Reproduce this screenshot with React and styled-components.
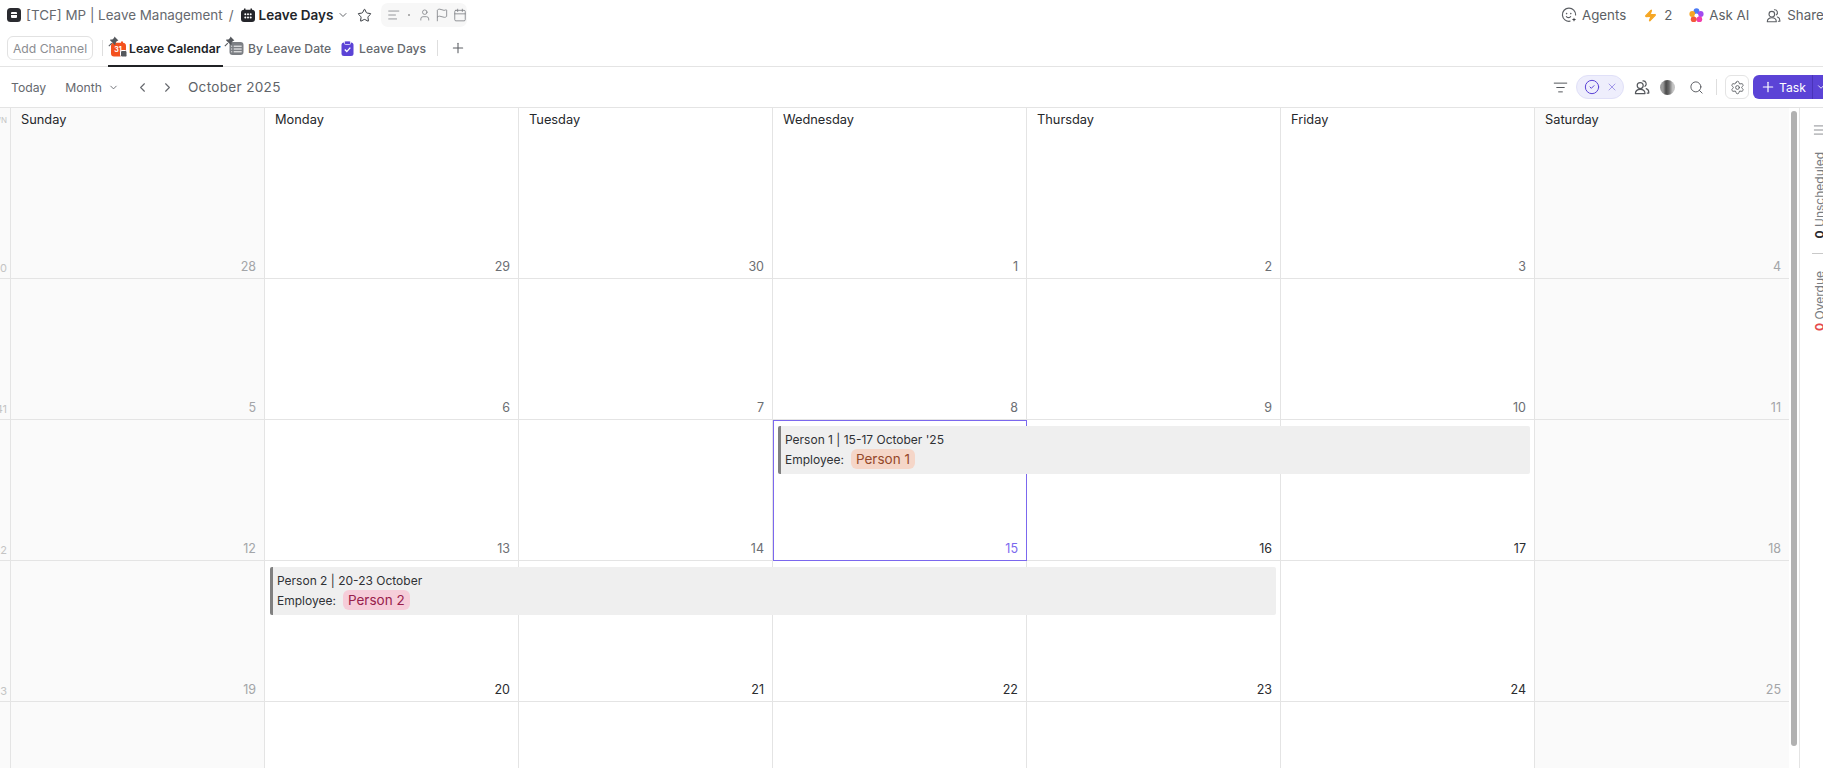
import React from 'react';
import styled, { createGlobalStyle } from 'styled-components';
import {
    AlignLeft, Calendar, ChevronDown, ChevronLeft, ChevronRight, CircleCheck, Flag,
    ListFilter, Menu, Plus, Search, Settings, Star, User, X, Zap,
} from 'lucide-react';

const GlobalStyle = createGlobalStyle`
    html, body {
        margin: 0;
        padding: 0;
        background: #fff;
        font-family: Inter, "Liberation Sans", sans-serif;
        overflow: hidden;
    }
    * { box-sizing: border-box; }
`;

const Page = styled.div`
    width: 1823px;
    height: 768px;
    overflow: hidden;
    display: flex;
    flex-direction: column;
    color: #2a2e34;
`;

const TopBar = styled.header`
    height: 30px;
    flex: none;
    display: flex;
    align-items: center;
    justify-content: space-between;
    padding-left: 7px;
`;

const Row = styled.div`
    display: flex;
    align-items: center;
    gap: ${(p) => p.$gap || 0}px;
`;

const Crumb = styled.span`
    font-size: ${(p) => (p.$strong ? 13.5 : 13.4)}px;
    color: ${(p) => (p.$strong ? '#22252a' : '#66696e')};
    font-weight: ${(p) => (p.$strong ? 600 : 400)};
    margin-left: ${(p) => p.$left || 0}px;
    white-space: nowrap;
`;

const MetaPill = styled.div`
    width: 86px;
    height: 24px;
    margin-left: 9px;
    background: #f7f7f7;
    border-radius: 7px;
    display: flex;
    align-items: center;
    padding-left: 6px;
    color: #7d8085;
`;

const Dot = styled.span`
    width: 2px;
    height: 2px;
    border-radius: 50%;
    background: #999;
    margin: 0 8px 0 7px;
`;

const TopActions = styled.div`
    display: flex;
    align-items: center;
    width: 262px;
    flex: none;
    color: #5c5f64;
    font-size: 13.3px;
    white-space: nowrap;
`;

const TopAction = styled.span`
    display: flex;
    align-items: center;
    gap: ${(p) => p.$gap || 5}px;
    margin-right: ${(p) => p.$right || 0}px;
`;

const TabBar = styled.nav`
    height: 37px;
    flex: none;
    display: flex;
    align-items: center;
    padding-left: 7px;
    border-bottom: 1px solid #e4e4e4;
`;

const ChannelButton = styled.button`
    width: 86px;
    height: 24px;
    padding: 0;
    font: 400 12.2px Inter, "Liberation Sans", sans-serif;
    color: #8b8d91;
    background: #fff;
    border: 1px solid #e2e2e2;
    border-radius: 6px;
`;

const VSep = styled.span`
    width: 1px;
    height: ${(p) => p.$h || 16}px;
    background: #dedede;
    margin: 0 ${(p) => p.$right || 0}px 0 ${(p) => p.$left || 0}px;
`;

const Tab = styled.div`
    position: relative;
    height: 37px;
    display: flex;
    align-items: center;
    gap: ${(p) => p.$gap || 4}px;
    width: ${(p) => p.$width}px;
    padding-left: ${(p) => p.$pad || 0}px;
    padding-top: 2px;
    font-size: 12.2px;
    font-weight: ${(p) => (p.$active ? 600 : 500)};
    color: ${(p) => (p.$active ? '#202225' : '#66696e')};
    white-space: nowrap;
    border-bottom: 2px solid ${(p) => (p.$active ? '#202225' : 'transparent')};
`;

const PinBadge = styled.svg`
    position: absolute;
    left: ${(p) => p.$left}px;
    top: 6px;
`;

const AddTab = styled.span`
    display: flex;
    margin-left: 12px;
    color: #5c5f64;
`;

const Toolbar = styled.div`
    height: 40px;
    flex: none;
    display: flex;
    align-items: center;
    justify-content: space-between;
    padding-left: 11px;
    font-size: 12.2px;
    color: #66696e;
`;

const ToolText = styled.span`
    margin-left: ${(p) => p.$left || 0}px;
    margin-right: ${(p) => p.$right || 0}px;
    white-space: nowrap;
`;

const Title = styled.span`
    font-size: 13.6px;
    letter-spacing: 0.3px;
    margin-left: 13px;
    color: #606368;
`;

const IconSlot = styled.span`
    display: flex;
    margin-left: ${(p) => p.$left || 0}px;
    margin-right: ${(p) => p.$right || 0}px;
    color: ${(p) => p.$color || 'inherit'};
`;

const Tools = styled.div`
    display: flex;
    align-items: center;
    width: 270px;
    flex: none;
    color: #55585d;
    & > * { flex: none; }
`;

const FilterPill = styled.div`
    width: 48px;
    height: 24px;
    margin-left: 8px;
    border-radius: 12px;
    background: #eeeefc;
    border: 1px solid #e0e0f8;
    display: flex;
    align-items: center;
    padding-left: 7px;
    gap: 6px;
    color: #5b43d6;
`;

const Avatar = styled.span`
    width: 15px;
    height: 15px;
    margin-left: 10px;
    border-radius: 50%;
    background: linear-gradient(90deg, #9c9c9c 0 20%, #4a4a4a 40%, #6a6a6a 60%, #c4c4c4 85%);
`;

const SettingsButton = styled.span`
    width: 24px;
    height: 24px;
    margin: 0 4px 0 8px;
    display: flex;
    align-items: center;
    justify-content: center;
    border: 1px solid #e4e4e4;
    border-radius: 6px;
`;

const TaskButton = styled.div`
    width: 80px;
    height: 24px;
    display: flex;
    align-items: center;
    background: #5b43d6;
    color: #fff;
    font-size: 12.2px;
    font-weight: 400;
    border-radius: 6px 0 0 6px;
    padding-left: 7px;
    gap: 3px;
    & > svg { flex: none; }
`;

const TaskSplit = styled.span`
    display: flex;
    flex: none;
    align-items: center;
    height: 24px;
    margin-left: 3px;
    padding-left: 3px;
    border-left: 1px solid #4a34b8;
`;

const Body = styled.div`
    flex: 1;
    min-height: 0;
    display: flex;
    border-top: 1px solid #e4e4e4;
`;

const CalendarArea = styled.main`
    position: relative;
    width: 1800px;
    flex: none;
    border-right: 1px solid #e4e4e4;
`;

const Scrollbar = styled.div`
    position: absolute;
    left: 1791px;
    top: 3px;
    width: 6px;
    height: 635px;
    border-radius: 3px;
    background: #b1b1b1;
`;

const Week = styled.section`
    display: grid;
    width: 1789px;
    height: ${(p) => p.$height}px;
    grid-template-columns: 11px repeat(7, 254px);
    grid-template-rows: 1fr;
`;

const WeekNo = styled.div`
    grid-row: 1;
    grid-column: 1;
    display: flex;
    flex-direction: column;
    justify-content: space-between;
    align-items: flex-end;
    overflow: hidden;
    background: #fafafa;
    border-right: 1px solid #e4e4e4;
    border-bottom: 1px solid #e4e4e4;
    padding: 7px 3px 3px 0;
    font-size: 11px;
    color: #c4c4c4;
    white-space: nowrap;
`;

const HeadMark = styled.span`
    font-size: 8px;
    line-height: 10px;
`;

const Cell = styled.div`
    grid-row: 1;
    grid-column: ${(p) => p.$col};
    display: flex;
    flex-direction: column;
    justify-content: space-between;
    background: ${(p) => (p.$weekend ? '#fafafa' : '#fff')};
    border-right: 1px solid #e4e4e4;
    border-bottom: 1px solid #e4e4e4;
    ${(p) => p.$selected && `
        border: 1px solid #7b68ee;
    `}
    ${(p) => p.$last && 'border-right: none;'}
`;

const DayName = styled.div`
    padding: 4px 0 0 10px;
    font-size: 12.8px;
    line-height: 15px;
    color: #25272b;
`;

const DateNo = styled.div`
    margin-top: auto;
    padding: 0 8px 3px 0;
    text-align: right;
    font-size: 12.5px;
    line-height: 16px;
    color: ${(p) => p.$color};
`;

const EventBar = styled.article`
    grid-row: 1;
    grid-column: ${(p) => p.$start} / span ${(p) => p.$span};
    z-index: 1;
    align-self: start;
    height: 48px;
    margin: 6px 5px 0;
    padding: 5px 0 0 4px;
    background: #efefef;
    border-left: 3px solid #808080;
    border-radius: 2px;
    font-size: 12px;
    color: #303236;
`;

const EventTitle = styled.div`
    line-height: 18px;
    white-space: nowrap;
`;

const EventMeta = styled.div`
    display: flex;
    align-items: center;
    height: 20px;
    gap: 7px;
`;

const Tag = styled.span`
    height: 20px;
    padding: 0 5px;
    border-radius: 6px;
    font-size: 13.5px;
    line-height: 20px;
    background: ${(p) => p.$bg};
    color: ${(p) => p.$fg};
`;

const SideRail = styled.aside`
    flex: 1;
    min-width: 0;
    display: flex;
    flex-direction: column;
    align-items: flex-start;
    padding: 15px 0 0 12px;
    color: #85888c;
    overflow: hidden;
`;

const RailItem = styled.div`
    writing-mode: vertical-rl;
    transform: rotate(180deg);
    font-size: 12px;
    line-height: 14px;
    margin-top: ${(p) => p.$top}px;
    margin-left: 1px;
    color: #7a7d82;
    white-space: nowrap;
`;

const RailCount = styled.b`
    font-weight: 700;
    color: ${(p) => p.$color};
`;

const RailRule = styled.span`
    display: block;
    width: 12px;
    height: 1px;
    margin-top: 15px;
    background: #c9c9c9;
`;

const pin = (left) => (
    <PinBadge $left={left} width="11" height="11" viewBox="0 0 11 11">
        <path d="M6.5 0.6 10.4 4.5 9 5 7.6 6.6 7.5 8.6 6.8 9 2 4.2 2.4 3.5 4.4 3.4 6 2Z" fill="#55585d" />
        <path d="M3.8 7.2 0.8 10.2" stroke="#55585d" strokeWidth="1.1" />
    </PinBadge>
);

const spaceIcon = (
    <svg width="14" height="14" viewBox="0 0 14 14">
        <rect x="0" y="0" width="14" height="14" rx="3.5" fill="#2a2b30" />
        <rect x="4" y="4" width="6" height="6" rx="1" fill="#fff" />
        <rect x="4" y="6" width="6" height="1" fill="#2a2b30" />
    </svg>
);

const listIcon = (
    <svg width="14" height="14" viewBox="0 0 14 14">
        <path d="M3 0.5h1.5v1.2h5V0.5H11v1.2A3 3 0 0 1 14 4.5v6.5a3 3 0 0 1-3 3H3a3 3 0 0 1-3-3V4.5a3 3 0 0 1 3-2.8Z" fill="#24252a" />
        <g fill="#fff">
            <circle cx="4.3" cy="6.3" r="1" /><circle cx="7" cy="6.3" r="1" /><circle cx="9.7" cy="6.3" r="1" />
            <circle cx="4.3" cy="9.5" r="1" /><circle cx="7" cy="9.5" r="1" /><circle cx="9.7" cy="9.5" r="1" />
        </g>
    </svg>
);

const orangeCalendar = (
    <svg width="17" height="17" viewBox="0 0 17 17">
        <path d="M4 1.5h2v1.3h5V1.5h2v1.3a3.2 3.2 0 0 1 3 3.2v7.5a3 3 0 0 1-3 3H4a3 3 0 0 1-3-3V6a3.2 3.2 0 0 1 3-3.2Z" fill="#f4511e" />
        <text x="8" y="12" textAnchor="middle" fontSize="7" fontWeight="700" fill="#fff" fontFamily="Inter, sans-serif">31</text>
        <rect x="10.5" y="10.5" width="6.5" height="6.5" rx="1.5" fill="#55585d" stroke="#fff" />
    </svg>
);

const tableIcon = (
    <svg width="15" height="15" viewBox="0 0 15 15">
        <rect x="0.5" y="1" width="14" height="13" rx="3" fill="#7c7f84" />
        <path d="M4.7 5.2h8M4.7 8h8M4.7 10.8h8M2.2 5.2h1M2.2 8h1M2.2 10.8h1" stroke="#fff" strokeWidth="1" />
    </svg>
);

const clipboardIcon = (
    <svg width="13" height="15" viewBox="0 0 13 15">
        <rect x="0.5" y="1.5" width="12" height="13.5" rx="2.5" fill="#5b43d6" />
        <rect x="3.5" y="0" width="6" height="3.5" rx="1" fill="#5b43d6" stroke="#fff" strokeWidth="0.7" />
        <path d="M3.8 8.6 5.8 10.6 9.3 6.6" fill="none" stroke="#fff" strokeWidth="1.4" />
    </svg>
);

const agentIcon = (
    <svg width="16" height="16" viewBox="0 0 16 16" fill="none" stroke="#5c5f64" strokeWidth="1.2">
        <path d="M9 14.2A6.6 6.6 0 1 1 14.6 8" strokeLinecap="round" />
        <circle cx="5.6" cy="6.6" r="0.8" fill="#5c5f64" stroke="none" />
        <circle cx="9.8" cy="6.6" r="0.8" fill="#5c5f64" stroke="none" />
        <path d="M5.4 9.6c1.2 1.2 3 1.2 4.2 0" strokeLinecap="round" />
        <path d="M13 10.4 13.6 12l1.6.6-1.6.6-.6 1.6-.6-1.6-1.6-.6 1.6-.6Z" fill="#3d3f44" stroke="none" />
    </svg>
);

const aiFlower = (
    <svg width="15" height="15" viewBox="0 0 15 15">
        <circle cx="7.5" cy="3.2" r="2.9" fill="#4b7bf5" />
        <circle cx="11.7" cy="6" r="2.9" fill="#a24bf0" />
        <circle cx="10.3" cy="11.2" r="2.9" fill="#f23dac" />
        <circle cx="4.7" cy="11.2" r="2.9" fill="#f4593a" />
        <circle cx="3.3" cy="6" r="2.9" fill="#f5a623" />
        <circle cx="7.5" cy="7.5" r="2" fill="#fff" />
    </svg>
);

const peopleIcon = (size) => (
    <svg width={size} height={size} viewBox="0 0 16 16" fill="none" stroke="currentColor" strokeWidth="1.2" strokeLinejoin="round" strokeLinecap="round">
        <circle cx="6.2" cy="6.6" r="3" />
        <path d="M1.4 14.6c0-2.6 2-4.2 4.8-4.2s4.8 1.6 4.8 4.2Z" />
        <path d="M9 1.9a3 3 0 0 1 2 5.4" />
        <path d="M12.2 9.6c1.6.5 2.6 1.9 2.6 3.9v.6h-1.6" />
    </svg>
);

const weeks = [
    {
        height: 171, no: 40,
        days: [[28, 'w'], [29, 'p'], [30, 'p'], [1, 'p'], [2, 'p'], [3, 'p'], [4, 'w']],
    },
    {
        height: 141, no: 41,
        days: [[5, 'w'], [6, 'p'], [7, 'p'], [8, 'p'], [9, 'p'], [10, 'p'], [11, 'w']],
    },
    {
        height: 141, no: 42,
        days: [[12, 'w'], [13, 'p'], [14, 'p'], [15, 't'], [16, 'f'], [17, 'f'], [18, 'w']],
        event: {
            start: 5, span: 3, title: "Person 1 | 15-17 October '25", name: 'Person 1', bg: '#f5d6c8', fg: '#94482a',
        },
    },
    {
        height: 141, no: 43,
        days: [[19, 'w'], [20, 'f'], [21, 'f'], [22, 'f'], [23, 'f'], [24, 'f'], [25, 'w']],
        event: {
            start: 3, span: 4, title: 'Person 2 | 20-23 October', name: 'Person 2', bg: '#f6cdd9', fg: '#98204c',
        },
    },
    { height: 100, days: [[], [], [], [], [], [], []] },
];

const dayNames = ['Sunday', 'Monday', 'Tuesday', 'Wednesday', 'Thursday', 'Friday', 'Saturday'];
const dateColors = { w: '#a3a5a8', p: '#6b6e73', t: '#7b68ee', f: '#2a2c30' };

function App() {
    return (
        <Page>
            <GlobalStyle />
            <TopBar>
                <Row>
                    {spaceIcon}
                    <Crumb $left={5}>[TCF] MP | Leave Management</Crumb>
                    <Crumb $left={6}>/</Crumb>
                    <IconSlot $left={7}>{listIcon}</IconSlot>
                    <Crumb $strong $left={4}>Leave Days</Crumb>
                    <IconSlot $left={4} $color="#66696e"><ChevronDown size={12} /></IconSlot>
                    <IconSlot $left={8}><Star size={15} strokeWidth={1.5} /></IconSlot>
                    <MetaPill>
                        <AlignLeft size={14} strokeWidth={1.4} />
                        <Dot />
                        <User size={14} strokeWidth={1.4} />
                        <IconSlot $left={4}><Flag size={14} strokeWidth={1.4} /></IconSlot>
                        <IconSlot $left={4}><Calendar size={14} strokeWidth={1.4} /></IconSlot>
                    </MetaPill>
                </Row>
                <TopActions>
                    <TopAction $right={18}>{agentIcon}Agents</TopAction>
                    <TopAction $gap={7} $right={17}><Zap size={13} fill="#f5a623" color="#f5a623" />2</TopAction>
                    <TopAction $right={17}>{aiFlower}Ask AI</TopAction>
                    <TopAction $gap={6}>{peopleIcon(15)}Share</TopAction>
                </TopActions>
            </TopBar>

            <TabBar>
                <ChannelButton>Add Channel</ChannelButton>
                <VSep $left={9} $right={5} />
                <Tab $active $width={115} $pad={2} $gap={2}>
                    {pin(0)}
                    {orangeCalendar}
                    Leave Calendar
                </Tab>
                <Tab $width={118} $pad={6}>
                    {pin(1)}
                    {tableIcon}
                    By Leave Date
                </Tab>
                <Tab $width={96} $pad={0} $gap={5}>
                    {clipboardIcon}
                    Leave Days
                </Tab>
                <VSep $right={0} />
                <AddTab><Plus size={16} strokeWidth={1.6} /></AddTab>
            </TabBar>

            <Toolbar>
                <Row>
                    <ToolText>Today</ToolText>
                    <ToolText $left={19}>Month</ToolText>
                    <IconSlot $left={6}><ChevronDown size={11} /></IconSlot>
                    <IconSlot $left={16}><ChevronLeft size={15} strokeWidth={1.8} /></IconSlot>
                    <IconSlot $left={10}><ChevronRight size={15} strokeWidth={1.8} /></IconSlot>
                    <Title>October 2025</Title>
                </Row>
                <Tools>
                    <ListFilter size={15} strokeWidth={1.6} />
                    <FilterPill>
                        <CircleCheck size={16} strokeWidth={1.5} />
                        <X size={12} color="#9a8fe6" strokeWidth={1.8} />
                    </FilterPill>
                    <IconSlot $left={10}>{peopleIcon(16)}</IconSlot>
                    <Avatar />
                    <IconSlot $left={14}><Search size={15} strokeWidth={1.5} /></IconSlot>
                    <VSep $left={12} $h={16} />
                    <SettingsButton><Settings size={15} strokeWidth={1.4} /></SettingsButton>
                    <TaskButton>
                        <Plus size={16} strokeWidth={1.8} />
                        Task
                        <TaskSplit><ChevronDown size={10} /></TaskSplit>
                    </TaskButton>
                </Tools>
            </Toolbar>

            <Body>
                <CalendarArea>
                    {weeks.map((week, w) => (
                        <Week key={w} $height={week.height}>
                            <WeekNo>
                                <HeadMark>{w === 0 ? 'WN' : ''}</HeadMark>
                                <span>{week.no}</span>
                            </WeekNo>
                            {week.days.map(([date, kind], d) => (
                                <Cell
                                    key={d}
                                    $col={d + 2}
                                    $weekend={d === 0 || d === 6}
                                    $last={d === 6}
                                    $selected={kind === 't'}
                                >
                                    {w === 0 && <DayName>{dayNames[d]}</DayName>}
                                    {date && <DateNo $color={dateColors[kind]}>{date}</DateNo>}
                                </Cell>
                            ))}
                            {week.event && (
                                <EventBar $start={week.event.start} $span={week.event.span}>
                                    <EventTitle>{week.event.title}</EventTitle>
                                    <EventMeta>
                                        Employee:
                                        <Tag $bg={week.event.bg} $fg={week.event.fg}>{week.event.name}</Tag>
                                    </EventMeta>
                                </EventBar>
                            )}
                        </Week>
                    ))}
                    <Scrollbar />
                </CalendarArea>
                <SideRail>
                    <Menu size={14} strokeWidth={1.6} />
                    <RailItem $top={15}><RailCount $color="#2a2c30">0</RailCount> Unscheduled</RailItem>
                    <RailRule />
                    <RailItem $top={17}><RailCount $color="#e5484d">0</RailCount> Overdue</RailItem>
                </SideRail>
            </Body>
        </Page>
    );
}

export default App;
